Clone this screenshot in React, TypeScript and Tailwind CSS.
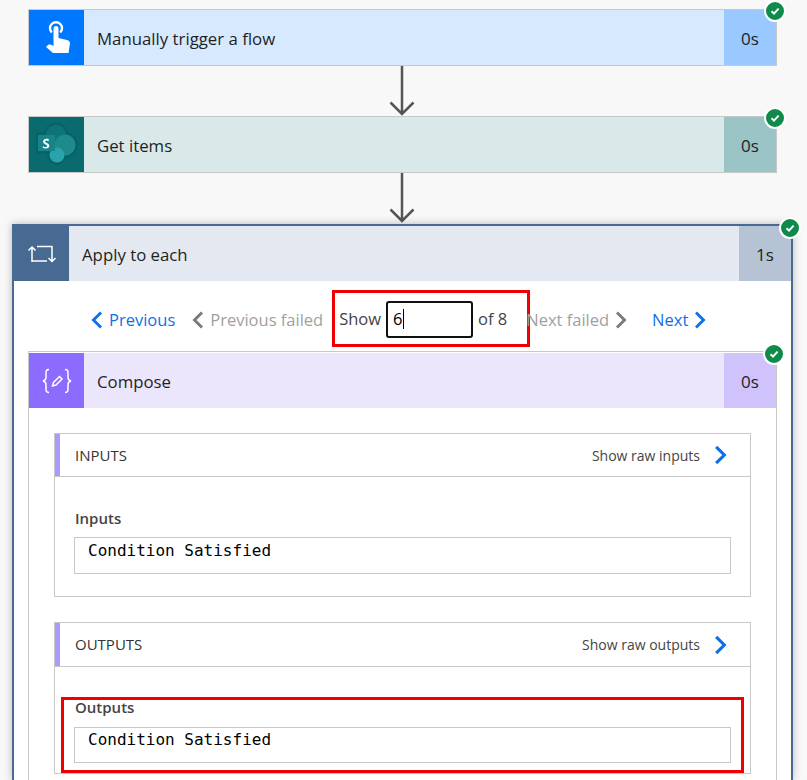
import React from 'react';

const SANS = "font-['Open_Sans','Liberation_Sans',sans-serif]";

const Check = ({ className }: { className: string }) => (
  <div className={`absolute z-10 flex h-[22px] w-[22px] items-center justify-center rounded-full border-2 border-white bg-[#0e8a4a] ${className}`}>
    <svg width="12" height="12" viewBox="0 0 12 12" fill="none">
      <path d="M2.5 6.2 L5 8.6 L9.6 3.6" stroke="white" strokeWidth="2" />
    </svg>
  </div>
);

const HandIcon = () => (
  <svg width="55" height="55" viewBox="0 0 55 55">
    <path d="M22.8 22.500a6 6 0 1 1 8.400 0" fill="none" stroke="white" strokeWidth="2.400" />
    <path d="M24.500 18.500a2.500 2.500 0 0 1 5 0V28l8.500 2c2 .5 3 1.500 3 3.500L39.500 43H24l-7-6 2-2c1-.8 2.500-.5 5.500 1z" fill="white" />
  </svg>
);

const SharePointIcon = () => (
  <svg width="55" height="55" viewBox="0 0 55 55">
    <g fill="#07636a" stroke="#07636a" strokeWidth="5">
      <circle cx="27" cy="18" r="10" />
      <circle cx="36" cy="28" r="10.500" />
      <circle cx="28" cy="38" r="7.500" />
      <rect x="9" y="18" width="17" height="16" />
    </g>
    <circle cx="27" cy="18" r="10" fill="#0e7478" />
    <circle cx="36" cy="28" r="10.500" fill="#1f8a8c" />
    <circle cx="28" cy="38" r="7.500" fill="#2aa3ab" />
    <rect x="9" y="18" width="17" height="16" fill="#178488" />
    <path d="M13.500 30.600c1 .7 2.200 1 3.400 1 2 0 3.400-1 3.400-2.800 0-1.500-.9-2.200-2.500-2.900-1.100-.5-1.600-.8-1.600-1.400s.5-1 1.300-1c.8 0 1.500.2 2.200.7v-2.100c-.7-.3-1.400-.4-2.300-.4-1.900 0-3.300 1.100-3.300 2.900 0 1.400.9 2.200 2.400 2.900 1.200.5 1.700.8 1.700 1.500s-.6 1.100-1.500 1.100c-.9 0-1.800-.3-2.600-.9z" fill="white" />
  </svg>
);

const LoopIcon = () => (
  <svg width="55" height="55" viewBox="0 0 55 55" fill="none" stroke="white" strokeWidth="1.500">
    <path d="M18 36V21M14.500 24.500L18 21l3.500 3.500" />
    <path d="M18 35h15" />
    <path d="M38 20v15.500M34.500 32l3.500 3.500 3.500-3.500" />
    <path d="M23 20.500h15" />
  </svg>
);

const ComposeIcon = () => (
  <svg width="30" height="26" viewBox="0 0 30 26" fill="none" stroke="white" strokeWidth="1.500">
    <path d="M7 1.500c-3 0-3 1.500-3 4v4c0 2-1 3-3 3.500 2 .5 3 1.500 3 3.500v4c0 2.500 0 4 3 4" />
    <path d="M23 1.500c3 0 3 1.500 3 4v4c0 2 1 3 3 3.500-2 .5-3 1.500-3 3.500v4c0 2.500 0 4-3 4" />
    <path d="M10.500 18l1-3.500 6-6 2.500 2.500-6 6z" />
  </svg>
);

const Chevron = ({ dir, color, big }: { dir: 'left' | 'right'; color: string; big?: boolean }) => (
  <svg width={big ? 13 : 12} height={big ? 20 : 18} viewBox="0 0 12 18" fill="none" stroke={color} strokeWidth="2.900">
    <path d={dir === 'left' ? 'M10 1.500 L2.500 9 L10 16.500' : 'M2 1.500 L9.500 9 L2 16.500'} />
  </svg>
);

const Arrow = ({ h }: { h: string }) => (
  <div className={`flex justify-center pr-[3px] ${h}`}>
    <svg width="28" height="50" viewBox="0 0 28 50" fill="none" stroke="#555555" strokeWidth="2.500">
      <path d="M14 0V48M2.500 36.500 L14 48 L25.500 36.500" />
    </svg>
  </div>
);

const StepHeader = ({ icon, iconBg, bg, timeBg, title, time }: { icon: React.ReactNode; iconBg: string; bg: string; timeBg: string; title: string; time: string }) => (
  <div className={`flex h-[55px] items-center ${bg}`}>
    <div className={`flex h-full w-[55px] items-center justify-center ${iconBg}`}>{icon}</div>
    <div className="flex-1 pl-[13px] pt-[3px] text-[16.8px] text-[#1f1f1f]">{title}</div>
    <div className={`flex h-full w-[52px] items-center justify-center pt-[3px] text-[17px] text-[#222222] ${timeBg}`}>{time}</div>
  </div>
);

const Panel = ({ title, rawLabel, headerH, children }: { title: string; rawLabel: string; headerH: string; children: React.ReactNode }) => (
  <div className="border border-[#c8c8c8] bg-white">
    <div className={`flex items-center justify-between border-l-[5px] border-[#a99bfd] pl-[15px] pr-[23px] ${headerH}`}>
      <span className="text-[15px] text-[#333333]">{title}</span>
      <div className="flex items-center gap-[14px]">
        <span className="text-[14px] text-[#444444]">{rawLabel}</span>
        <Chevron dir="right" color="#0f6fe8" big />
      </div>
    </div>
    <div className="border-t border-[#c8c8c8] px-[19px]">{children}</div>
  </div>
);

const ValueBox = ({ size }: { size: string }) => (
  <div className={`border border-[#c8c8c8] pl-[13px] font-['DejaVu_Sans_Mono',monospace] text-[16px] text-black ${size}`}>
    Condition Satisfied
  </div>
);

export default function App() {
  return (
    <div className={`h-[780px] w-[807px] overflow-hidden bg-[#f8f8f8] pt-[9px] ${SANS}`}>
      <div className="relative ml-[28px] mr-[30px] border border-[#c8c8c8]">
        <Check className="-right-[10px] -top-[10px]" />
        <StepHeader icon={<HandIcon />} iconBg="bg-[#0077ff]" bg="bg-[#d7e9ff]" timeBg="bg-[#99c9ff]" title="Manually trigger a flow" time="0s" />
      </div>
      <Arrow h="h-[50px]" />
      <div className="relative ml-[28px] mr-[30px] border border-[#c8c8c8]">
        <Check className="-right-[10px] -top-[10px]" />
        <StepHeader icon={<SharePointIcon />} iconBg="bg-[#0a6b6f]" bg="bg-[#d9e9e9]" timeBg="bg-[#9ac4c5]" title="Get items" time="0s" />
      </div>
      <Arrow h="h-[51px]" />

      <div className="relative ml-[12px] mr-[14px] border-2 border-b-0 border-[#4a6a94] bg-white shadow-[0_0_8px_rgba(0,0,0,0.25)]">
        <Check className="-right-[10px] -top-[9px]" />
        <StepHeader icon={<LoopIcon />} iconBg="bg-[#486991]" bg="bg-[#e4e8f0]" timeBg="bg-[#b6c3d4]" title="Apply to each" time="1s" />

        <div className="flex h-[70px] items-center pl-[77px] pt-[4px] text-[16.5px]">
          <div className="flex items-center gap-[6px] pt-[4px] text-[#0f6fe8]">
            <Chevron dir="left" color="#0f6fe8" />
            <span>Previous</span>
          </div>
          <div className="ml-[17px] flex items-center gap-[6px] pt-[4px] text-[#a0a0a0]">
            <Chevron dir="left" color="#7a7a7a" />
            <span>Previous failed</span>
          </div>
          <div className="ml-[9px] flex h-[57px] w-[198px] items-center border-[3px] border-[#f00000] pl-[4px] text-[#444444]">
            <span className="pt-[3px]">Show</span>
            <div className="ml-[5px] mt-[2px] flex h-[37px] w-[87px] items-center rounded-[3px] border-2 border-[#111111] pl-[5px] text-black">
              6<span className="h-[20px] w-px bg-black" />
            </div>
            <span className="ml-[5px] pt-[3px]">of 8</span>
          </div>
          <div className="-ml-[4px] flex items-center gap-[6px] pt-[4px] text-[#a0a0a0]">
            <span>Next failed</span>
            <Chevron dir="right" color="#7a7a7a" />
          </div>
          <div className="ml-[25px] flex items-center gap-[6px] pt-[4px] text-[#0f6fe8]">
            <span>Next</span>
            <Chevron dir="right" color="#0f6fe8" />
          </div>
        </div>

        <div className="relative mx-[14px] border-x border-t border-[#c8c8c8] pt-px">
          <Check className="-right-[9px] -top-[9px]" />
          <StepHeader icon={<ComposeIcon />} iconBg="bg-[#8c6cff]" bg="bg-[#ece6fd]" timeBg="bg-[#d0c3fc]" title="Compose" time="0s" />
          <div className="h-[372px] px-[25px] pt-[25px]">
            <Panel title="INPUTS" rawLabel="Show raw inputs" headerH="h-[42px]">
              <div className="pb-[22px] pt-[32px]">
                <div className="mb-[9px] pl-[1px] text-[15px] font-semibold leading-[19px] text-[#444444]">Inputs</div>
                <ValueBox size="h-[37px] leading-[26px]" />
              </div>
            </Panel>
            <div className="mt-[25px]">
              <Panel title="OUTPUTS" rawLabel="Show raw outputs" headerH="h-[43px]">
                <div className="-mx-[13px] mt-[30px] border-[3px] border-[#f00000] px-[10px] pb-[7px]">
                  <div className="mb-[13px] pl-[1px] text-[15px] font-semibold leading-[14px] text-[#444444]">Outputs</div>
                  <ValueBox size="h-[36px] leading-[24px]" />
                </div>
              </Panel>
            </div>
          </div>
        </div>
      </div>
    </div>
  );
}
